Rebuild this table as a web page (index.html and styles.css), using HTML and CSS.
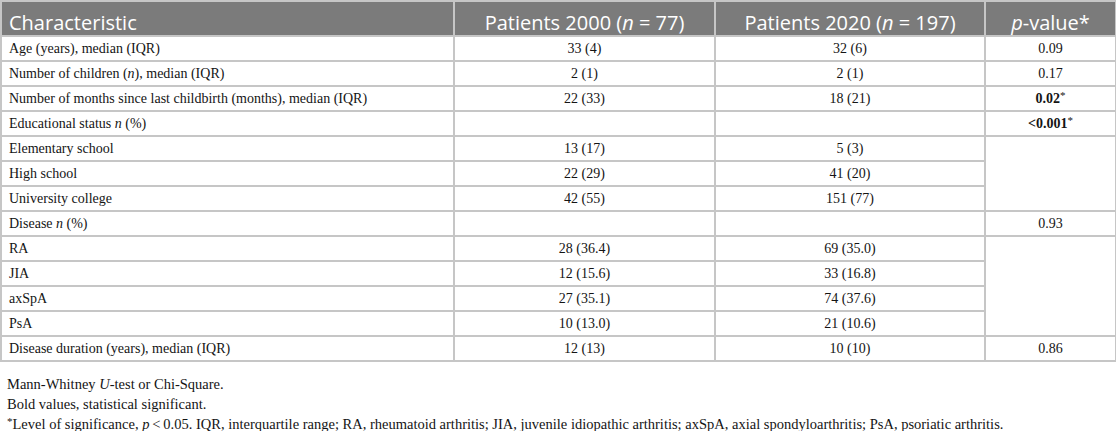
FILE: index.html
```html
<!DOCTYPE html>
<html>
<head>
<meta charset="utf-8">
<link rel="stylesheet" href="styles.css">
</head>
<body>
<table class="tbl">
  <colgroup>
    <col class="c1"><col class="c2"><col class="c3"><col class="c4">
  </colgroup>
  <thead>
    <tr>
      <th class="left">Characteristic</th>
      <th>Patients 2000 (<i>n</i> = 77)</th>
      <th>Patients 2020 (<i>n</i> = 197)</th>
      <th><i>p</i>-value*</th>
    </tr>
  </thead>
  <tbody>
    <tr><td class="left">Age (years), median (IQR)</td><td>33 (4)</td><td>32 (6)</td><td>0.09</td></tr>
    <tr><td class="left">Number of children (<i>n</i>), median (IQR)</td><td>2 (1)</td><td>2 (1)</td><td>0.17</td></tr>
    <tr><td class="left">Number of months since last childbirth (months), median (IQR)</td><td>22 (33)</td><td>18 (21)</td><td><b>0.02</b><sup>*</sup></td></tr>
    <tr><td class="left">Educational status <i>n</i> (%)</td><td></td><td></td><td><b>&lt;0.001</b><sup>*</sup></td></tr>
    <tr><td class="left">Elementary school</td><td>13 (17)</td><td>5 (3)</td><td rowspan="3"></td></tr>
    <tr><td class="left">High school</td><td>22 (29)</td><td>41 (20)</td></tr>
    <tr><td class="left">University college</td><td>42 (55)</td><td>151 (77)</td></tr>
    <tr><td class="left">Disease <i>n</i> (%)</td><td></td><td></td><td>0.93</td></tr>
    <tr><td class="left">RA</td><td>28 (36.4)</td><td>69 (35.0)</td><td rowspan="4"></td></tr>
    <tr><td class="left">JIA</td><td>12 (15.6)</td><td>33 (16.8)</td></tr>
    <tr><td class="left">axSpA</td><td>27 (35.1)</td><td>74 (37.6)</td></tr>
    <tr><td class="left">PsA</td><td>10 (13.0)</td><td>21 (10.6)</td></tr>
    <tr><td class="left">Disease duration (years), median (IQR)</td><td>12 (13)</td><td>10 (10)</td><td>0.86</td></tr>
  </tbody>
</table>
<div class="notes">
  <p>Mann-Whitney <i>U</i>-test or Chi-Square.</p>
  <p>Bold values, statistical significant.</p>
  <p><sup>*</sup>Level of significance, <i>p</i>&thinsp;&lt;&thinsp;0.05. IQR, interquartile range; RA, rheumatoid arthritis; JIA, juvenile idiopathic arthritis; axSpA, axial spondyloarthritis; PsA, psoriatic arthritis.</p>
</div>
</body>
</html>
```

FILE: styles.css
```css
html, body {
  margin: 0;
  padding: 0;
  background: #ffffff;
}

body {
  font-family: "Liberation Serif", "Times New Roman", serif;
  color: #141414;
  width: 1116px;
}

.tbl {
  width: 1115px;
  table-layout: fixed;
  border-collapse: separate;
  border-spacing: 0;
  border-left: 2px solid #c6c6c6;
  border-top: 2px solid #c6c6c6;
}

.c1 { width: 453px; }
.c2 { width: 261px; }
.c3 { width: 270px; }
.c4 { width: 131px; }

.tbl th,
.tbl td {
  border-right: 2px solid #c6c6c6;
  border-bottom: 2px solid #c6c6c6;
  text-align: center;
  padding: 0 6px;
  white-space: nowrap;
}

.tbl th {
  background: #7b7b7b;
  color: #ffffff;
  font-family: "Open Sans", "Noto Sans", sans-serif;
  font-weight: 400;
  font-size: 20px;
  line-height: 24px;
  height: 24px;
  padding-top: 9px;
  padding-bottom: 0;
  vertical-align: bottom;
}

.tbl td {
  font-size: 14px;
  line-height: 22px;
  height: 22px;
  padding-top: 1px;
  padding-bottom: 0;
  vertical-align: middle;
}

.tbl .left {
  text-align: left;
  padding-left: 7px;
}

.tbl sup,
.notes sup {
  font-size: 11px;
  line-height: 0;
  vertical-align: 4px;
}

.notes {
  padding: 12px 0 0 7px;
  font-size: 14.5px;
}

.notes p {
  margin: 0;
  line-height: 20px;
}
```
